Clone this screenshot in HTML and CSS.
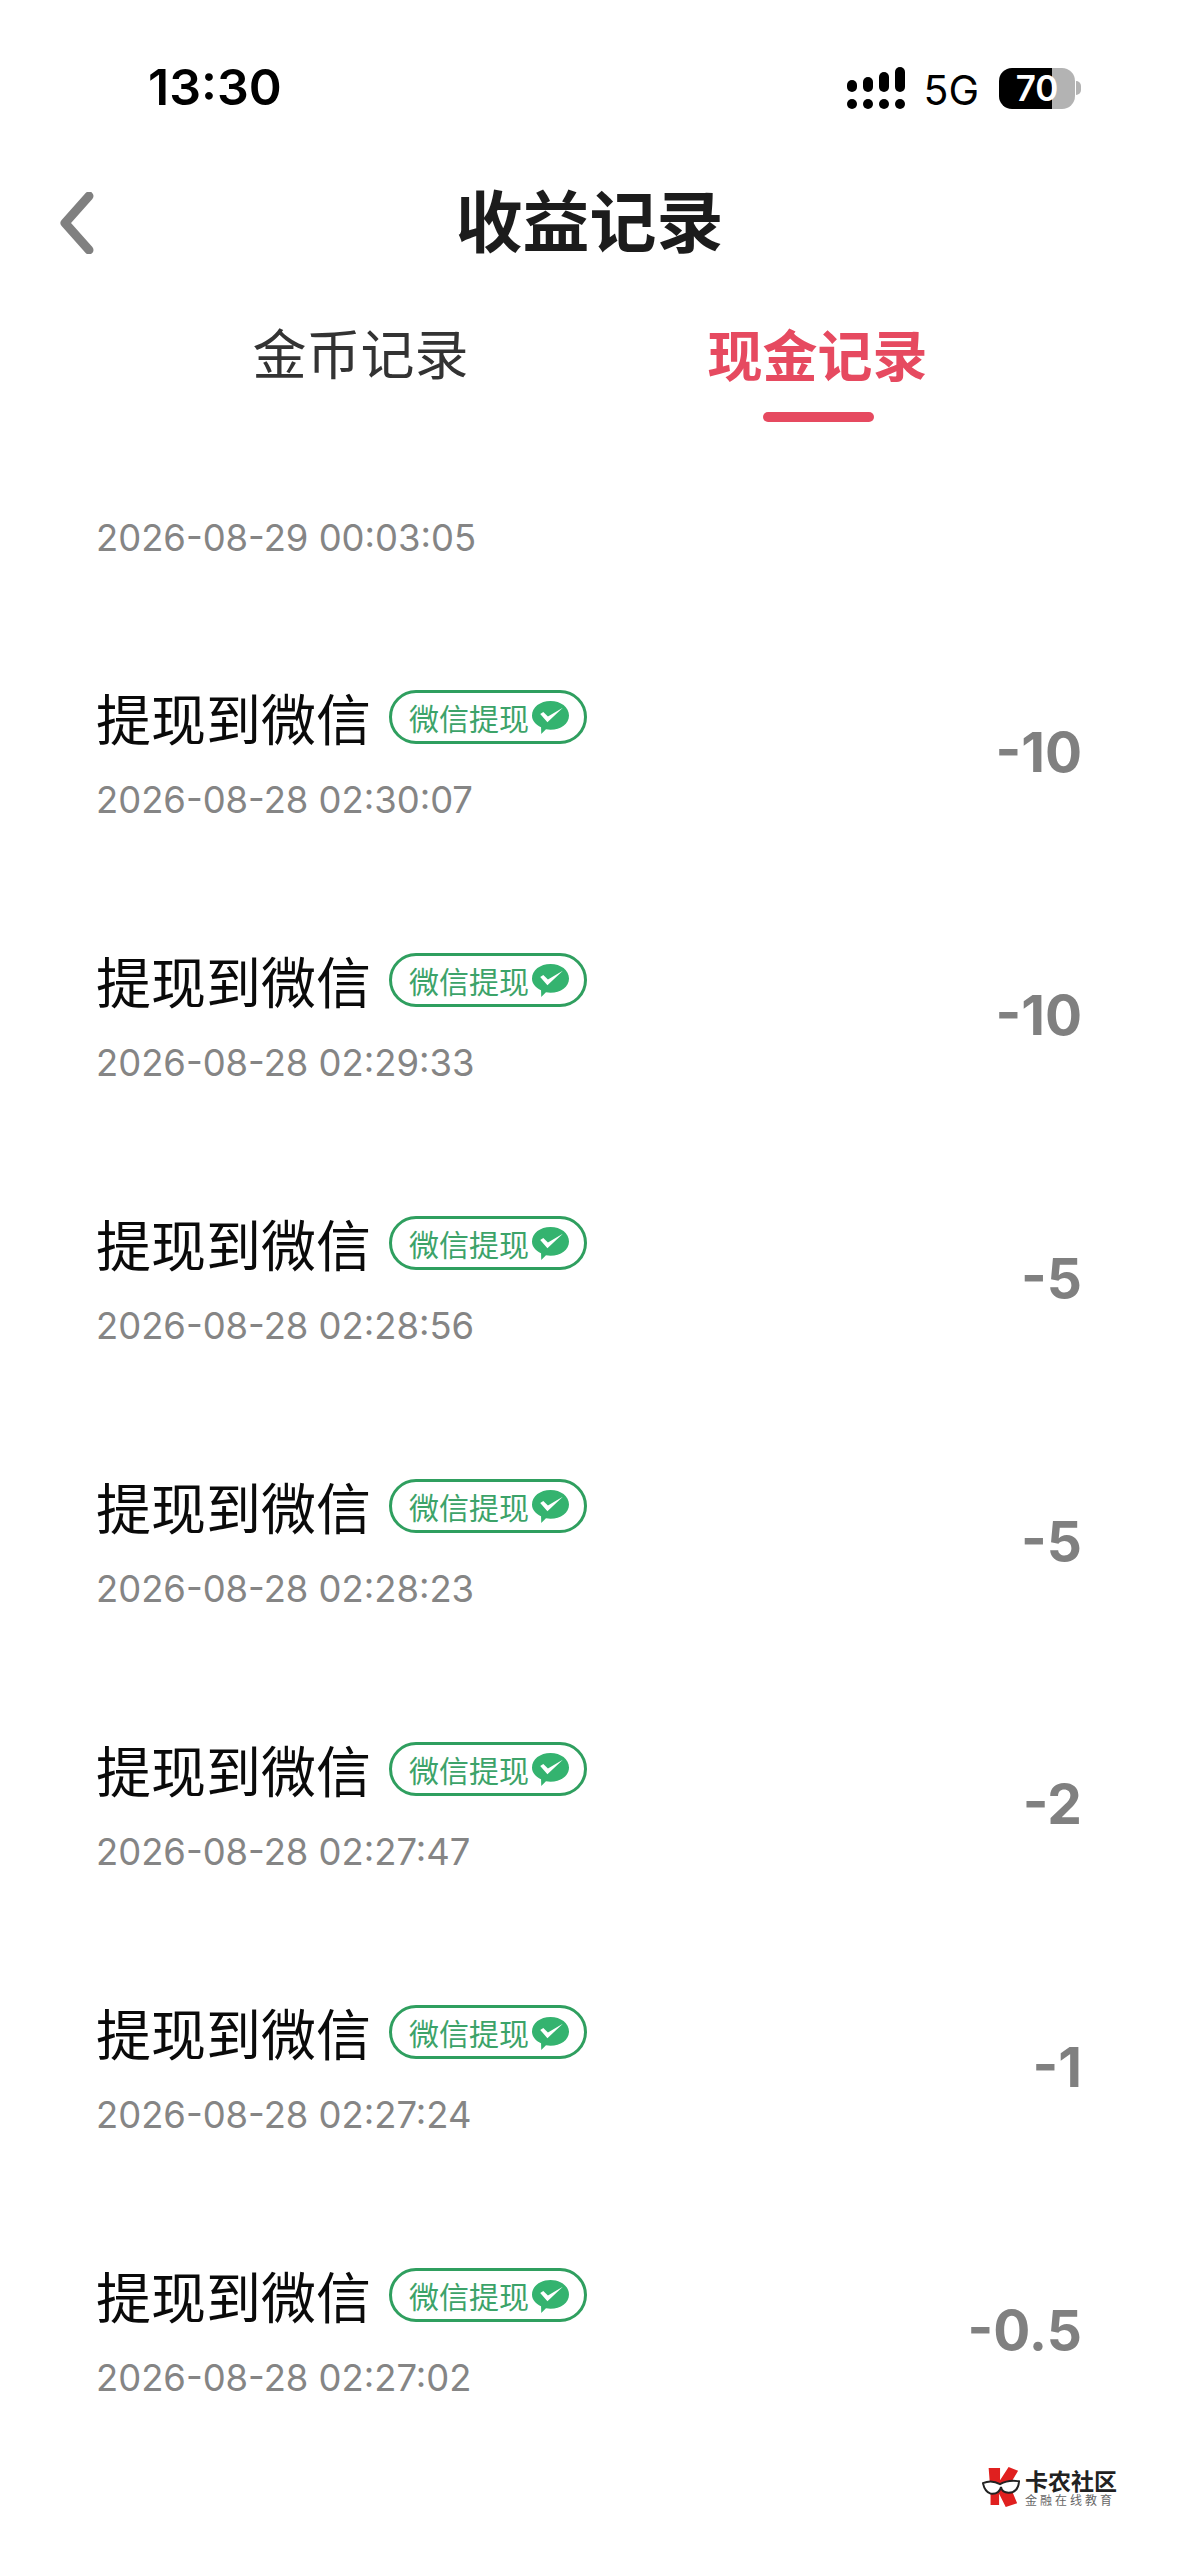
FILE: index.html
```html
<!DOCTYPE html>
<html>
<head>
    <title>收益记录</title>
    <link rel="stylesheet" href="styles.css">
</head>
<body>
    <div class="page">
        <div class="status">
            <span class="time">13:30</span>
            <div class="status-right">
                <svg class="signal" width="58" height="42" viewBox="0 0 58 42">
                    <g fill="#000">
                        <circle cx="5" cy="37" r="5"/><circle cx="21" cy="37" r="5"/><circle cx="37" cy="37" r="5"/><circle cx="53" cy="37" r="5"/>
                        <rect x="0" y="13" width="10" height="12" rx="5"/>
                        <rect x="16" y="10" width="10" height="15" rx="5"/>
                        <rect x="32" y="5" width="10" height="20" rx="5"/>
                        <rect x="48" y="0" width="10" height="25" rx="5"/>
                    </g>
                </svg>
                <span class="net">5G</span>
                <div class="battery">70</div>
                <span class="battery-tip"></span>
            </div>
        </div>

        <div class="nav">
            <svg class="back" width="38" height="62" viewBox="0 0 38 62">
                <path d="M31 4 L7 31 L31 58" fill="none" stroke="#808080" stroke-width="9" stroke-linecap="round" stroke-linejoin="round"/>
            </svg>
            <h1>收益记录</h1>
        </div>

        <div class="tabs">
            <div class="tab">金币记录</div>
            <div class="tab active">现金记录</div>
        </div>

        <div class="list">
            <div class="row first"><div class="date">2026-08-29 00:03:05</div></div>
            <div class="row">
                <div class="info">
                    <div class="line"><span class="name">提现到微信</span><span class="pill">微信提现<svg class="wx" viewBox="0 0 36 36"><use href="#wx"/></svg></span></div>
                    <div class="date">2026-08-28 02:30:07</div>
                </div>
                <div class="amount">-10</div>
            </div>
            <div class="row">
                <div class="info">
                    <div class="line"><span class="name">提现到微信</span><span class="pill">微信提现<svg class="wx" viewBox="0 0 36 36"><use href="#wx"/></svg></span></div>
                    <div class="date">2026-08-28 02:29:33</div>
                </div>
                <div class="amount">-10</div>
            </div>
            <div class="row">
                <div class="info">
                    <div class="line"><span class="name">提现到微信</span><span class="pill">微信提现<svg class="wx" viewBox="0 0 36 36"><use href="#wx"/></svg></span></div>
                    <div class="date">2026-08-28 02:28:56</div>
                </div>
                <div class="amount">-5</div>
            </div>
            <div class="row">
                <div class="info">
                    <div class="line"><span class="name">提现到微信</span><span class="pill">微信提现<svg class="wx" viewBox="0 0 36 36"><use href="#wx"/></svg></span></div>
                    <div class="date">2026-08-28 02:28:23</div>
                </div>
                <div class="amount">-5</div>
            </div>
            <div class="row">
                <div class="info">
                    <div class="line"><span class="name">提现到微信</span><span class="pill">微信提现<svg class="wx" viewBox="0 0 36 36"><use href="#wx"/></svg></span></div>
                    <div class="date">2026-08-28 02:27:47</div>
                </div>
                <div class="amount">-2</div>
            </div>
            <div class="row">
                <div class="info">
                    <div class="line"><span class="name">提现到微信</span><span class="pill">微信提现<svg class="wx" viewBox="0 0 36 36"><use href="#wx"/></svg></span></div>
                    <div class="date">2026-08-28 02:27:24</div>
                </div>
                <div class="amount">-1</div>
            </div>
            <div class="row">
                <div class="info">
                    <div class="line"><span class="name">提现到微信</span><span class="pill">微信提现<svg class="wx" viewBox="0 0 36 36"><use href="#wx"/></svg></span></div>
                    <div class="date">2026-08-28 02:27:02</div>
                </div>
                <div class="amount">-0.5</div>
            </div>
        </div>

        <div class="mark">
            <svg class="mark-logo" width="38" height="40" viewBox="0 0 40 42">
                <path d="M7 1 H19 V14 L28 0 L38 4 L29 19 L37 38 L25 42 L18 28 V40 H9 V27 Z" fill="#e0201f"/>
                <path d="M1 17 Q10 13 19 18 Q28 13 39 15 Q38 27 28 27 Q21 27 20 21 Q18 29 9 28 Q3 26 1 17 Z" fill="#fff" stroke="#222" stroke-width="2"/>
            </svg>
            <div class="mark-text">
                <div class="mark-name">卡农社区</div>
                <div class="mark-sub">金融在线教育</div>
            </div>
        </div>
    </div>

    <svg width="0" height="0" class="defs">
        <symbol id="wx" viewBox="0 0 36 36">
            <path d="M18 3 C28 3 36 9 36 17 C36 25 28 31 18 31 C16.500 31 15 30.800 13.600 30.500 L9 35 L8.800 28.500 C3.500 26 0 22 0 17 C0 9 8 3 18 3 Z" fill="#34b36f"/>
            <path d="M8 15.500 L11 13.500 L15.500 18 L30 9.500 L15 23.500 Z" fill="#fff"/>
        </symbol>
    </svg>
</body>
</html>
```

FILE: styles.css
```css
* {
    box-sizing: border-box;
}
body {
    margin: 0;
    background: #fff;
    font-family: "Noto Sans CJK SC", Inter, sans-serif;
}
.page {
    position: relative;
    width: 1179px;
    height: 2556px;
    overflow: hidden;
}
.defs {
    position: absolute;
}

/* status bar */
.status {
    height: 166px;
    padding: 60px 0 0 148px;
    display: flex;
    justify-content: space-between;
    align-items: flex-start;
}
.time {
    font-family: Inter, sans-serif;
    font-size: 50px;
    font-weight: 600;
    line-height: 54px;
    color: #000;
}
.status-right {
    display: flex;
    align-items: center;
    height: 42px;
    margin-top: 7px;
    padding-right: 98px;
}
.net {
    font-family: Inter, sans-serif;
    font-size: 41px;
    line-height: 46px;
    margin: 4px 0 0 18px;
    color: #000;
}
.signal {
    display: block;
}
.battery {
    width: 76px;
    height: 41px;
    margin-left: 20px;
    border-radius: 13px;
    background: linear-gradient(to right, #000 53px, #b3b3b3 53px);
    text-align: center;
    font-family: Inter, sans-serif;
    font-size: 35px;
    font-weight: 600;
    line-height: 41px;
    color: #fff;
}
.battery-tip {
    width: 5px;
    height: 14px;
    margin-left: 1px;
    border-radius: 0 7px 7px 0;
    background: #b3b3b3;
}

/* title */
.nav {
    position: relative;
    height: 104px;
    text-align: center;
}
.nav h1 {
    margin: 0;
    font-size: 67px;
    font-weight: 700;
    line-height: 104px;
    color: #1c1c1c;
}
.back {
    position: absolute;
    left: 58px;
    top: 26px;
}

/* tabs */
.tabs {
    display: grid;
    grid-template-columns: 457px 457px;
    padding-left: 132px;
    margin-top: 32px;
}
.tab {
    position: relative;
    height: 100px;
    text-align: center;
    font-size: 54px;
    line-height: 100px;
    color: #333;
}
.tab.active {
    font-size: 55px;
    font-weight: 700;
    color: #e64a60;
}
.tab.active::after {
    content: "";
    position: absolute;
    left: 174px;
    width: 111px;
    top: 110px;
    height: 10px;
    border-radius: 5px;
    background: #e64a60;
}

/* records */
.list {
    padding: 0 97px 0 96px;
}
.row {
    height: 263.1px;
    display: flex;
    justify-content: space-between;
    align-items: center;
}
.row.first {
    height: 218px;
    align-items: flex-start;
    padding-top: 113px;
}
.line {
    display: flex;
    align-items: center;
    height: 70px;
}
.name {
    font-size: 55px;
    line-height: 70px;
    color: #0a0a0a;
}
.pill {
    display: flex;
    align-items: center;
    height: 54px;
    width: 198px;
    margin: 2px 0 0 18px;
    padding-left: 17px;
    border: 3px solid #2f9f5f;
    border-radius: 27px;
    font-size: 30px;
    color: #3ca369;
    white-space: nowrap;
}
.wx {
    width: 37px;
    height: 37px;
    margin-left: 3px;
}
.date {
    margin-top: 26px;
    font-family: Inter, sans-serif;
    font-size: 36.4px;
    line-height: 46px;
    color: #858585;
}
.first .date {
    margin-top: 0;
}
.amount {
    font-family: Inter, sans-serif;
    font-size: 55px;
    font-weight: 700;
    color: #808080;
}

/* watermark */
.mark {
    position: absolute;
    left: 982px;
    top: 2467px;
    display: flex;
    align-items: center;
    gap: 5px;
}
.mark-name {
    font-size: 23px;
    font-weight: 700;
    line-height: 25px;
    letter-spacing: 0;
    color: #222;
}
.mark-sub {
    font-size: 12px;
    line-height: 14px;
    letter-spacing: 3px;
    color: #666;
}
```
